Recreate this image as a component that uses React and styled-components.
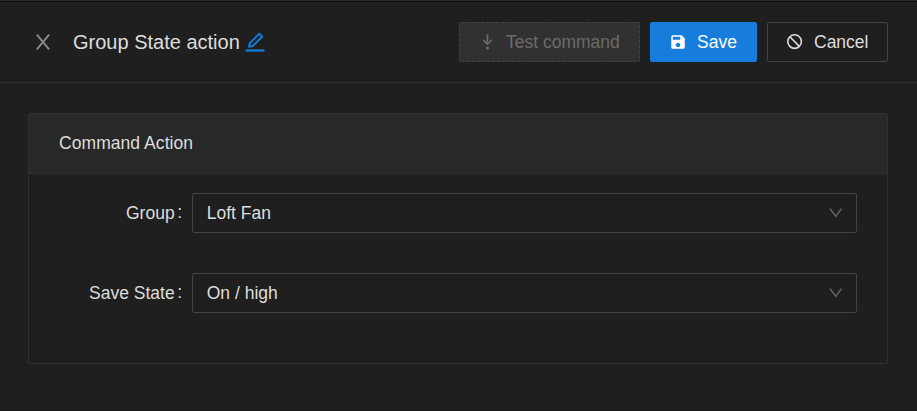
import React from "react";
import styled, { createGlobalStyle, css } from "styled-components";
import { AiOutlineEdit } from "react-icons/ai";
import { MdSave } from "react-icons/md";

const GlobalStyle = createGlobalStyle`
  * { box-sizing: border-box; }
  html, body { margin: 0; background: #1f1f1f; }
  body {
    font-family: "Liberation Sans", Arial, sans-serif;
    font-size: 17.5px;
    line-height: 27.5px;
    color: #dddddd;
    overflow: hidden;
  }
  button { font: inherit; }
`;

const Drawer = styled.div`
  display: flex;
  flex-direction: column;
  height: 411px;
  background: #1f1f1f;
  border-top: 1px solid #2c2a35;
  border-bottom: 1px solid #17171a;
  box-shadow: inset 0 1px 0 #111111;
`;

const Header = styled.header`
  display: flex;
  align-items: center;
  height: 82px;
  padding: 0 29px 0 33px;
  border-bottom: 1px solid #303030;
`;

const IconButton = styled.button`
  display: flex;
  padding: 0;
  border: 0;
  background: none;
`;

const CloseButton = styled(IconButton)`
  margin-right: 20px;
  color: #8a8a8a;
`;

const Title = styled.h1`
  margin: 0;
  font-size: 20px;
  font-weight: 400;
  line-height: 28px;
`;

const EditButton = styled(IconButton)`
  margin-left: 3px;
  color: #177ddc;
  font-size: 24px;

  svg { stroke: currentColor; stroke-width: 12px; }
`;

const Actions = styled.div`
  display: flex;
  gap: 10px;
  margin-left: auto;
`;

const variants = {
  disabled: css`
    border: 1px dashed #434343;
    background: #313131;
    color: #6b6b6b;
  `,
  primary: css`
    border: 1px solid #177ddc;
    background: #177ddc;
    color: #ffffff;
  `,
  plain: css`
    border: 1px solid #434343;
    background: #1f1f1f;
    color: #dddddd;
  `,
};

const Button = styled.button`
  display: flex;
  align-items: center;
  gap: 10px;
  width: ${({ $width }) => $width}px;
  height: 40px;
  padding: 0 0 0 18px;
  border-radius: 2px;
  white-space: nowrap;
  ${({ $variant }) => variants[$variant]}

  svg { flex: none; font-size: 18px; }
`;

const ButtonText = styled.span`
  padding-top: 2px;
`;

const Card = styled.section`
  height: 251px;
  margin: 30px 29px 0 28px;
  border: 1px solid #303030;
  border-radius: 2px;
`;

const CardTitle = styled.h2`
  display: flex;
  align-items: center;
  height: 60px;
  margin: 0;
  padding: 0 30px;
  border-bottom: 1px solid #303030;
  background: #282828;
  font-size: 17.5px;
  font-weight: 400;
  letter-spacing: 0.06px;
`;

const Form = styled.div`
  display: grid;
  gap: 40px;
  padding: 19px 30px 0;
`;

const Field = styled.div`
  display: grid;
  grid-template-columns: 133px 1fr;
  align-items: center;
`;

const Label = styled.label`
  padding-top: 1px;
  text-align: right;

  &::after {
    content: ":";
    position: relative;
    top: -0.6px;
    margin: 0 10px 0 2.5px;
  }
`;

const Select = styled.div`
  display: flex;
  align-items: center;
  justify-content: space-between;
  height: 40px;
  padding: 0 13px 0 13.75px;
  border: 1px solid #434343;
  border-radius: 2px;

  svg { color: #696969; }
`;

const SelectValue = styled.span`
  padding-top: 1px;
`;

function CloseIcon() {
  return (
    <svg width="20" height="20" viewBox="0 0 20 20" fill="none" stroke="currentColor" strokeWidth="1.9">
      <path d="M3.9 2.7 16.1 17.3M16.1 2.7 3.9 17.3" />
    </svg>
  );
}

function ChevronIcon() {
  return (
    <svg width="15" height="15" viewBox="0 0 15 15" fill="none" stroke="currentColor" strokeWidth="1.4">
      <path d="M2 2.6 7.7 10.4 13.4 2.6" />
    </svg>
  );
}

function ArrowToDotIcon() {
  return (
    <svg width="18" height="18" viewBox="0 0 18 18" fill="none" stroke="currentColor" strokeWidth="1.6">
      <path d="M9.5 1.2V11M5.2 6.9l4.3 4.3 4.3-4.3" />
      <circle cx="9.5" cy="14.9" r="1.5" fill="currentColor" stroke="none" />
    </svg>
  );
}

function ProhibitedIcon() {
  return (
    <svg width="18" height="18" viewBox="0 0 18 18" fill="none" stroke="currentColor" strokeWidth="1.6">
      <circle cx="8.6" cy="8.6" r="6.8" />
      <path d="m3.8 3.8 9.6 9.6" />
    </svg>
  );
}

function SelectField({ label, value }) {
  return (
    <Field>
      <Label>{label}</Label>
      <Select role="combobox" aria-label={label} tabIndex={0}>
        <SelectValue>{value}</SelectValue>
        <ChevronIcon />
      </Select>
    </Field>
  );
}

export default function App() {
  return (
    <>
      <GlobalStyle />
      <Drawer>
        <Header>
          <CloseButton aria-label="Close"><CloseIcon /></CloseButton>
          <Title>Group State action</Title>
          <EditButton aria-label="Edit"><AiOutlineEdit /></EditButton>
          <Actions>
            <Button $variant="disabled" $width={181} disabled>
              <ArrowToDotIcon /><ButtonText>Test command</ButtonText>
            </Button>
            <Button $variant="primary" $width={107}>
              <MdSave /><ButtonText>Save</ButtonText>
            </Button>
            <Button $variant="plain" $width={121}>
              <ProhibitedIcon /><ButtonText>Cancel</ButtonText>
            </Button>
          </Actions>
        </Header>
        <Card>
          <CardTitle>Command Action</CardTitle>
          <Form>
            <SelectField label="Group" value="Loft Fan" />
            <SelectField label="Save State" value="On / high" />
          </Form>
        </Card>
      </Drawer>
    </>
  );
}
